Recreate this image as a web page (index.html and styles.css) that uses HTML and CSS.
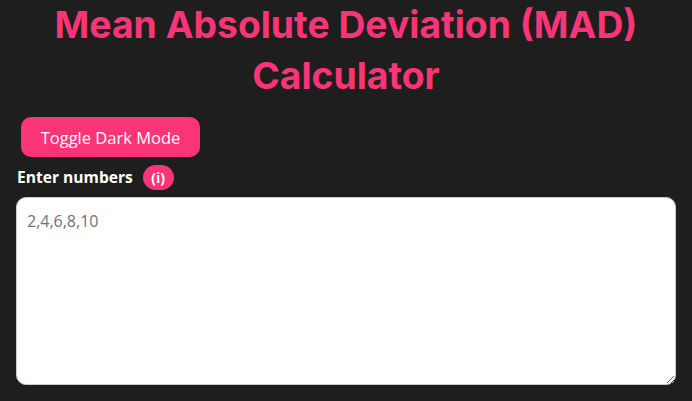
FILE: index.html
```html
<!DOCTYPE html>
<html lang="en">
<head>
    <meta charset="UTF-8">
    <meta name="viewport" content="width=device-width, initial-scale=1.0">
    <title>Mean Absolute Deviation (MAD) Calculator</title>
    <link rel="stylesheet" href="styles.css">
</head>
<body>
    <h1>Mean Absolute Deviation (MAD) Calculator</h1>
    <button class="toggle-btn">Toggle Dark Mode</button>
    <div class="field-label">
        <label for="numbers">Enter numbers</label>
        <span class="info-badge">(i)</span>
    </div>
    <textarea id="numbers" placeholder="2,4,6,8,10"></textarea>
</body>
</html>
```

FILE: styles.css
```css
html {
    overflow: hidden;
}
body {
    font-family: 'Open Sans', 'Noto Sans', sans-serif;
    margin: 0;
    padding: 0 16px;
    background-color: #1e1e1e;
    color: #fff;
}
h1 {
    font-family: 'Inter', sans-serif;
    font-size: 37.3px;
    font-weight: 700;
    line-height: 51px;
    color: #f93577;
    text-align: center;
    margin: -1px 0 16px;
}
.toggle-btn {
    display: block;
    font-family: inherit;
    font-size: 16.5px;
    width: 179px;
    height: 40px;
    margin-left: 5px;
    background-color: #f93577;
    color: #fff;
    border: none;
    border-radius: 10px;
}
.field-label {
    display: flex;
    align-items: center;
    gap: 10px;
    height: 24px;
    margin-top: 8px;
    margin-left: 1px;
    font-size: 15.6px;
    font-weight: 700;
}
.info-badge {
    background-color: #f93577;
    border-radius: 13px;
    padding: 0 8.5px;
    height: 25px;
    line-height: 25px;
    font-size: 14px;
}
textarea {
    display: block;
    box-sizing: border-box;
    width: 660px;
    height: 188px;
    margin-top: 8px;
    padding: 12px 10px;
    font-family: inherit;
    font-size: 16px;
    background-color: #fff;
    border: 1px solid #ccc;
    border-radius: 10px;
}
textarea::placeholder {
    color: #6b7280;
}
```
